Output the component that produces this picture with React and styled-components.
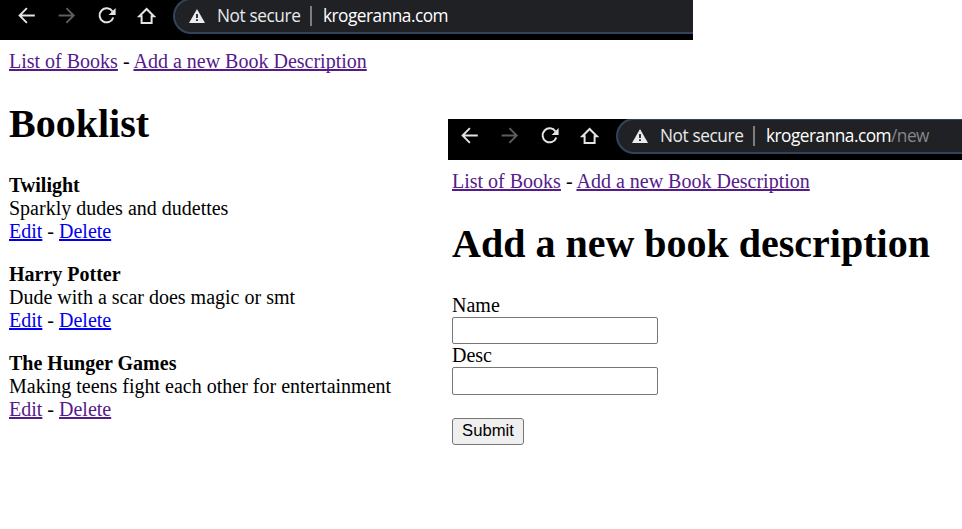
import React from "react";
import styled, { createGlobalStyle } from "styled-components";

const GlobalStyle = createGlobalStyle`
  *, *::before, *::after { box-sizing: border-box; }
  body { margin: 0; background: #fff; overflow: hidden; }
`;

const Canvas = styled.main`
  display: grid;
  grid-template-columns: 448px 514px;
  height: 529px;
  overflow: hidden;
  font: 20px/23px "Liberation Serif", "Times New Roman", serif;
  color: #000;
`;

const Shot = styled.section`
  width: ${(p) => p.$width}px;
  margin-top: ${(p) => p.$top}px;
`;

const BrowserBar = styled.header`
  display: flex;
  align-items: flex-end;
  height: ${(p) => p.$height}px;
  padding-left: ${(p) => p.$inset}px;
  overflow: hidden;
  background: #000;
`;

const NavIcons = styled.div`
  display: flex;
  gap: 20px;
  margin-bottom: 14px;
  color: #e4e4e4;
  svg { display: block; width: 20px; height: 20px; overflow: visible; }
`;

const AddressBar = styled.div`
  display: flex;
  flex: 1;
  align-items: center;
  height: 36px;
  margin: 0 0 6px 16px;
  padding: 0 0 0 14px;
  border: solid #34435d;
  border-width: 2px 0 2px 2px;
  border-radius: 18px 0 0 18px;
  background: #202124;
  color: #fff;
  font: 17.3px/24px "Open Sans", "Noto Sans", sans-serif;
  white-space: nowrap;
  svg { display: block; flex: none; width: 16px; height: 14px; margin-right: 12px; }
`;

const Security = styled.span`
  width: 93px;
  color: #e8eaed;
  letter-spacing: -0.42px;
`;

const Divider = styled.span`
  width: 2px;
  height: 20px;
  margin-right: 11px;
  background: #7d7e80;
`;

const Address = styled.span`
  letter-spacing: -0.52px;
`;

const Path = styled.span`
  color: #85878a;
`;

const Content = styled.div`
  padding: 10px 0 0 ${(p) => p.$left}px;
  white-space: nowrap;
`;

const Link = styled.a`
  color: ${(p) => (p.$visited ? "#551a8b" : "#0000ee")};
  text-decoration: underline 2px;
  text-underline-offset: 1px;
  text-decoration-skip-ink: none;
`;

const Title = styled.h1`
  margin: 28px 0 27px;
  font-size: 40px;
  line-height: 46px;
`;

const Book = styled.article`
  margin-bottom: 20px;
`;

const BookName = styled.div`
  font-weight: bold;
`;

const Form = styled.form`
  display: flex;
  flex-direction: column;
  align-items: flex-start;
`;

const Input = styled.input`
  display: block;
  width: 206px;
  height: ${(p) => p.$height}px;
  margin: 0;
  border: 1px solid #767676;
  border-radius: 2px;
  background: #fff;
`;

const Submit = styled.button`
  width: 72px;
  height: 27px;
  margin-top: 23px;
  padding: 0 0 1px;
  border: 1px solid #767676;
  border-radius: 3px;
  background: #efefef;
  color: #000;
  font: 16.67px "Liberation Sans", Arial, sans-serif;
`;

function Chrome({ height, inset, path }) {
  return (
    <BrowserBar $height={height} $inset={inset}>
      <NavIcons>
        <svg viewBox="0 0 20 20" fill="none" stroke="currentColor" strokeWidth="1.9">
          <path d="M17.8 9.5H2.7M9.9 2.2 2.6 9.5l7.3 7.3" />
        </svg>
        <svg viewBox="0 0 20 20" fill="none" stroke="#5d5d5d" strokeWidth="1.9">
          <path d="M1.6 9.5h15M9.4 2.2l7.3 7.3-7.3 7.3" />
        </svg>
        <svg viewBox="0 0 20 20" fill="none" stroke="currentColor" strokeWidth="2">
          <path d="M16.3 11.5A7 7 0 1 1 15.5 5.5" />
          <path d="M18.6 2v7h-7z" fill="currentColor" stroke="none" />
        </svg>
        <svg viewBox="0 0 20 20" fill="none" stroke="currentColor" strokeWidth="2">
          <path d="M2.3 10.2 9.6 3l7.3 7.2h-2.3v6.9h-10v-6.9z" />
        </svg>
      </NavIcons>
      <AddressBar>
        <svg viewBox="0 0 16 14">
          <path d="M8 0 16 14H0z" fill="#e8eaed" />
          <path d="M7.1 5h1.8v4H7.1zM7.1 10.3h1.8v1.8H7.1z" fill="#202124" />
        </svg>
        <Security>Not secure</Security>
        <Divider />
        <Address>
          krogeranna.com{path && <Path>{path}</Path>}
        </Address>
      </AddressBar>
    </BrowserBar>
  );
}

function SiteNav() {
  return (
    <nav>
      <Link $visited>List of Books</Link> - <Link $visited>Add a new Book Description</Link>
    </nav>
  );
}

const books = [
  { name: "Twilight", desc: "Sparkly dudes and dudettes" },
  { name: "Harry Potter", desc: "Dude with a scar does magic or smt" },
  { name: "The Hunger Games", desc: "Making teens fight each other for entertainment", visited: true },
];

export default function App() {
  return (
    <>
      <GlobalStyle />
      <Canvas>
        <Shot $width={693} $top={0}>
          <Chrome height={40} inset={17} />
          <Content $left={9}>
            <SiteNav />
            <Title>Booklist</Title>
            {books.map((book) => (
              <Book key={book.name}>
                <BookName>{book.name}</BookName>
                <div>{book.desc}</div>
                <Link $visited={book.visited}>Edit</Link> - <Link $visited={book.visited}>Delete</Link>
              </Book>
            ))}
          </Content>
        </Shot>
        <Shot $width={514} $top={119}>
          <Chrome height={41} inset={12} path="/new" />
          <Content $left={4}>
            <SiteNav />
            <Title>Add a new book description</Title>
            <Form>
              <label htmlFor="name">Name</label>
              <Input id="name" $height={27} />
              <label htmlFor="desc">Desc</label>
              <Input id="desc" $height={28} />
              <Submit type="button">Submit</Submit>
            </Form>
          </Content>
        </Shot>
      </Canvas>
    </>
  );
}
